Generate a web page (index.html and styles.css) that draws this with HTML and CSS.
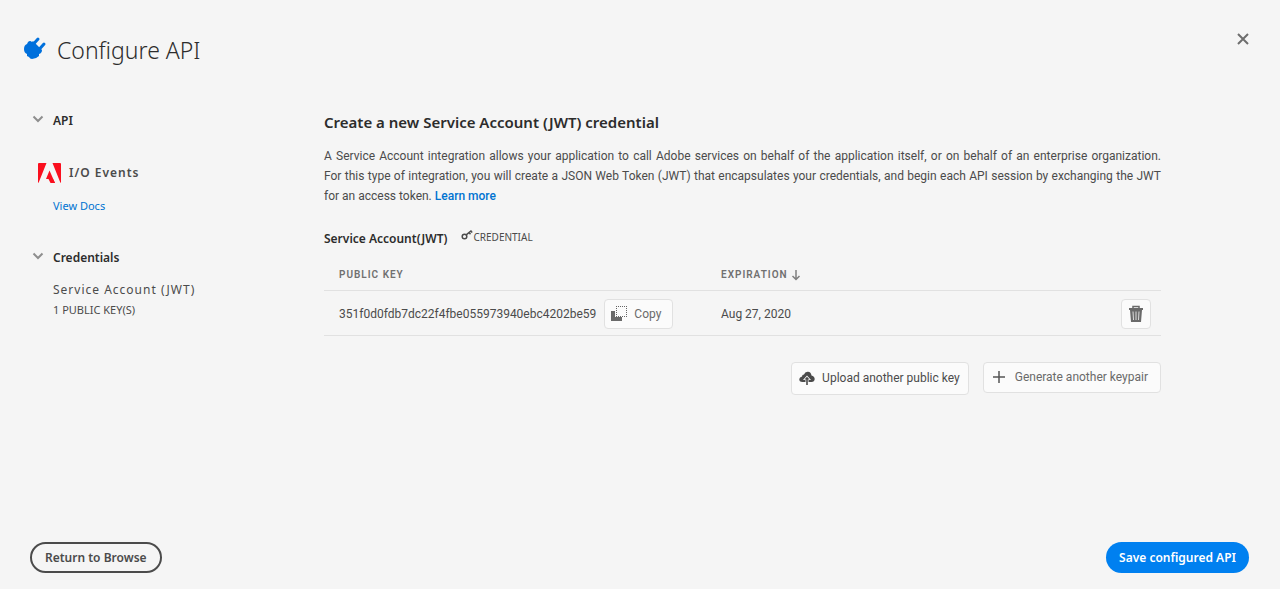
FILE: index.html
```html
<!DOCTYPE html>
<html lang="en">
<head>
<meta charset="utf-8">
<title>Configure API</title>
<meta name="viewport" content="width=device-width, initial-scale=1">
<link rel="stylesheet" href="styles.css">
</head>
<body>
<div class="page">
  <header class="header">
    <svg class="plug" viewBox="0 0 24 24" aria-hidden="true">
      <path d="M1 13 Q1 9 4 8 L5 6 Q7 4 9 6 L10 5 L17 12 L19 14 Q19 17 16 18 L16 20 Q13 23 9 23 Q7 23 6 21 L4 20 L4 18 Q1 17 1 13Z"/>
      <path class="prong" d="M11 7.500 L15 3 M16.500 13 L21 8"/>
    </svg>
    <h1 class="title">Configure API</h1>
    <button class="close" type="button" aria-label="Close">
      <svg width="12" height="12" viewBox="0 0 12 12"><path d="M1 1 L11 11 M11 1 L1 11"/></svg>
    </button>
  </header>

  <div class="body">
    <nav class="sidebar">
      <section class="group group-api">
        <button class="toggle" type="button"><svg width="12" height="8" viewBox="0 0 12 8"><path d="M1.500 1.500 L6 6 L10.500 1.500"/></svg><span>API</span></button>
        <div class="product">
          <svg width="23" height="20" viewBox="0 0 23 20" aria-hidden="true">
            <rect width="23" height="20" rx="1" fill="#fa0f1e"/>
            <path fill="#f5f5f5" d="M8.500 0 H14.500 L22.500 20 H17 L15 16 H10.500 L12.500 20 H0.500Z"/>
            <path fill="#fa0f1e" d="M11.500 7.500 L17 20 H13.500 L12 16 H8Z"/>
          </svg>
          <span>I/O Events</span>
        </div>
        <a class="docs" href="#docs">View Docs</a>
      </section>
      <section class="group">
        <button class="toggle" type="button"><svg width="12" height="8" viewBox="0 0 12 8"><path d="M1.500 1.500 L6 6 L10.500 1.500"/></svg><span>Credentials</span></button>
        <p class="account">Service Account (JWT)</p>
        <p class="count">1 PUBLIC KEY(S)</p>
      </section>
    </nav>

    <main class="main">
      <h2 class="heading">Create a new Service Account (JWT) credential</h2>
      <p class="intro">A Service Account integration allows your application to call Adobe services on behalf of the application itself, or on behalf of an enterprise organization. <span class="keep">For this</span> type of integration, you will create a JSON Web Token (JWT) that encapsulates your credentials, and begin each API session by exchanging the JWT <span class="keep">for an</span> access token. <a href="#more">Learn more</a></p>
      <div class="subhead">
        <h3>Service Account(JWT)</h3>
        <span class="badge"><svg width="12" height="12" viewBox="0 0 12 12" aria-hidden="true"><circle cx="3.500" cy="7.500" r="2.300"/><path d="M5.200 5.800 L10.500 1.500 M8 3.600 L9.500 5.200 M9.800 2 L11.200 3.500"/></svg>CREDENTIAL</span>
      </div>
      <table class="keys">
        <thead>
          <tr>
            <th class="col-key" scope="col">PUBLIC KEY</th>
            <th scope="col">EXPIRATION <svg width="10" height="12" viewBox="0 0 10 12" aria-hidden="true"><path d="M5 1 V10.500 M1.500 7 L5 10.500 L8.500 7"/></svg></th>
            <th class="col-action" aria-label="Actions"></th>
          </tr>
        </thead>
        <tbody>
          <tr>
            <td><div class="key"><span>351f0d0fdb7dc22f4fbe055973940ebc4202be59</span>
              <button class="btn copy" type="button"><svg width="16" height="16" viewBox="0 0 16 16" aria-hidden="true"><path fill="#6a6a6a" d="M0 5 H4 V11 H11 V15 H0Z"/><path fill="none" stroke="#666" stroke-dasharray="1 1" d="M5 0.500 H16 M5 10.500 H16 M5.500 0 V11 M15.500 0 V11"/></svg>Copy</button></div></td>
            <td>Aug 27, 2020</td>
            <td><button class="btn trash" type="button" aria-label="Delete key"><svg width="16" height="18" viewBox="0 0 16 18" aria-hidden="true"><path fill="none" stroke="#6a6a6a" stroke-width="1.500" d="M5 3 V1.500 H11 V3"/><path fill="#6a6a6a" d="M1 3 H15 V5 H14 L13 17 H3 L2 5 H1Z"/><path stroke="#ddd" d="M5 6.500 L5.500 15 M8 6.500 V15 M11 6.500 L10.500 15"/></svg></button></td>
          </tr>
        </tbody>
      </table>
      <div class="actions">
        <button class="btn upload" type="button"><svg width="16" height="14" viewBox="0 0 16 14" aria-hidden="true"><path fill="#4b4b4b" d="M3.500 11 Q0 11 0.300 8 Q0.500 6 3 5.500 Q3 3.500 5 3.500 Q6 0.500 9 0.800 Q12 1 12.500 4.500 Q15.500 5 15.700 8 Q15.500 11 12.500 11Z"/><path fill="#fbfbfb" d="M8 4.500 L12 9 H9.500 V11 H6.500 V9 H4Z"/><path fill="#4b4b4b" d="M8 5.800 L10.500 8.500 H8.800 V14 H7.200 V8.500 H5.500Z"/></svg>Upload another public key</button>
        <button class="btn generate" type="button"><svg width="12" height="12" viewBox="0 0 12 12" aria-hidden="true"><path fill="none" stroke="#555" stroke-width="1.500" d="M6 0 V12 M0 6 H12"/></svg>Generate another keypair</button>
      </div>
    </main>
  </div>

  <footer class="footer">
    <button class="pill outline" type="button">Return to Browse</button>
    <button class="pill primary" type="button">Save configured API</button>
  </footer>
</div>
</body>
</html>
```
FILE: styles.css
```css
* { box-sizing: border-box; }
body { margin: 0; background: #f5f5f5; color: #4b4b4b; font: 12px/20px Roboto, "Open Sans", sans-serif; }
h1, h2, h3, p { margin: 0; }
button { font: inherit; color: inherit; margin: 0; padding: 0; border: 0; background: none; cursor: pointer; }
svg { flex: none; }
a { color: #0073d1; text-decoration: none; }
.page { display: flex; flex-direction: column; min-height: 100vh; }
.header, .sidebar, .heading, .subhead, .footer { font-family: "Noto Sans", "Open Sans", sans-serif; }

.header { display: flex; align-items: flex-start; padding: 32px 31px 0 23px; }
.plug { width: 24px; height: 24px; margin-top: 4px; fill: #0070dc; }
.prong { stroke: #0070dc; stroke-width: 3; stroke-linecap: round; }
.title { margin-left: 10px; color: #2c2c2c; font-size: 23px; font-weight: 300; line-height: 36px; }
.close { margin-left: auto; display: flex; }
.close svg { margin-top: 1px; }
.close path { stroke: #6e6e6e; stroke-width: 2; }

.body { display: flex; flex: 1; padding: 42px 119px 0 32px; }
.sidebar { flex: 0 0 292px; }
.toggle { display: flex; align-items: center; gap: 9px; margin-top: 1px; color: #2c2c2c; font-weight: 600; }
.toggle svg { margin-bottom: 4px; }
.toggle path { fill: none; stroke: #8e8e8e; stroke-width: 2; }
.group-api { margin-bottom: 32px; }
.product { display: flex; align-items: center; gap: 8px; margin: 32px 0 13px 6px; font-weight: 600; letter-spacing: 1px; }
.docs { display: block; margin-left: 21px; font-size: 11px; }
.account { margin: 12px 0 0 21px; letter-spacing: 1px; }
.count { margin-left: 21px; font-size: 11px; }

.main { flex: 1; min-width: 0; }
.heading { color: #2c2c2c; font-size: 15px; font-weight: 600; line-height: 24px; }
.intro { margin-top: 12px; text-align: justify; }
.intro a { font-weight: 500; }
.keep { white-space: nowrap; }
.subhead { display: flex; align-items: flex-start; gap: 14px; margin-top: 23px; }
.subhead h3 { color: #2c2c2c; font-size: 12px; font-weight: 600; }
.badge { display: flex; align-items: center; font-size: 10px; line-height: 16px; }
.badge svg { margin-bottom: 4px; }
.badge svg * { fill: none; stroke: #4b4b4b; stroke-width: 1.5; }

.keys { width: 100%; margin-top: 8px; border-collapse: collapse; table-layout: fixed; }
.keys th, .keys td { padding: 0 0 0 15px; border-bottom: 1px solid #e1e1e1; text-align: left; }
.keys th { height: 33px; padding-top: 3px; color: #707070; font-size: 10px; font-weight: 600; letter-spacing: 1px; }
.keys th svg { vertical-align: -3px; }
.keys th path { fill: none; stroke: #808080; stroke-width: 1.5; }
.keys td { height: 45px; padding-top: 2px; }
.keys .col-key { width: 382px; }
.keys .col-action { width: 55px; }
.key { display: flex; align-items: center; gap: 8px; }

.btn { display: flex; align-items: center; height: 31px; border: 1px solid #e1e1e1; border-radius: 4px; background: #fbfbfb; white-space: nowrap; }
.copy { height: 30px; gap: 7px; padding: 0 11px 0 6px; color: #6a6a6a; }
.trash { width: 30px; height: 30px; justify-content: center; }
.actions { display: flex; align-items: flex-start; justify-content: flex-end; gap: 14px; margin-top: 26px; }
.upload { height: 33px; gap: 7px; padding: 0 8px 0 7px; }
.generate { gap: 10px; padding: 0 12px 0 9px; color: #6a6a6a; }

.footer { display: flex; justify-content: space-between; padding: 16px 31px 16px 30px; }
.pill { height: 31px; padding: 0 13px; border-radius: 16px; font-weight: 600; }
.outline { border: 2px solid #4b4b4b; }
.primary { background: #0080f0; color: #fff; }
```
